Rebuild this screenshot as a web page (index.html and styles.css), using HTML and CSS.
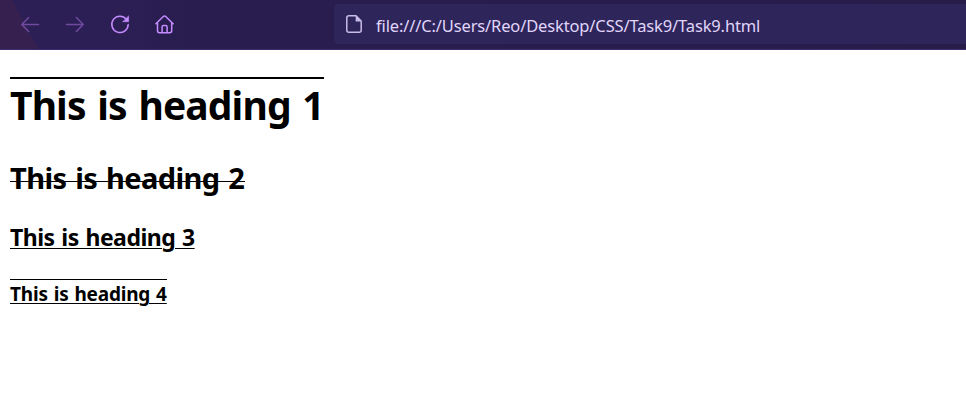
FILE: index.html
```html
<!DOCTYPE html>
<html lang="en">
<head>
<meta charset="utf-8">
<title>Task9</title>
<link rel="stylesheet" href="styles.css">
</head>
<body>
<header class="toolbar">
  <nav class="nav">
    <svg class="dim" viewBox="0 0 24 24"><path d="M20.5 12.5H3.8M10.6 5.5L3.8 12.5L10.6 19.5"/></svg>
    <svg class="dim" viewBox="0 0 24 24"><path d="M3.5 12.5H20.2M13.4 5.5L20.2 12.5L13.4 19.5"/></svg>
    <svg viewBox="0 0 24 24"><path d="M18.4 7.2A8.2 8.2 0 1 0 20.2 12.6"/><path class="solid" d="M20.6 4.2V9.7H15Z"/></svg>
    <svg viewBox="0 0 24 24"><path d="M2.9 11.7L10.3 4.5Q11.5 3.3 12.7 4.5L20.1 11.7M4.5 10.4V18.8Q4.5 20.7 6.4 20.7H16.8Q18.7 20.7 18.7 18.8V10.4M9.1 20.5V15Q9.1 13.6 10.5 13.6H12.7Q14.1 13.6 14.1 15V20.5"/></svg>
  </nav>
  <div class="address">
    <svg class="file" viewBox="0 0 16 18"><path d="M3 .8H10L15.2 6V15.2Q15.2 17.2 13.2 17.2H3Q.8 17.2 .8 15.2V2.8Q.8 .8 3 .8Z"/><path class="solid" d="M9.7 .8V6.4H15.2Z"/></svg>
    <span class="url">file:///C:/Users/Reo/Desktop/CSS/Task9/Task9.html</span>
  </div>
</header>
<main>
  <h1>This is heading 1</h1>
  <h2>This is heading 2</h2>
  <h3>This is heading 3</h3>
  <h4>This is heading 4</h4>
</main>
</body>
</html>
```
FILE: styles.css
```css
* { box-sizing: border-box; }
body {
  margin: 0;
  background: #fff;
  color: #000;
  font-family: "Noto Sans", sans-serif;
}
.toolbar {
  display: flex;
  height: 50px;
  padding: 4px 0 5px 18px;
  border-bottom: 1px solid #3b2c6b;
  background:
    linear-gradient(62deg, #35204f 0, #35204f 33px, transparent 34px),
    linear-gradient(90deg, #2c1f55 0, #2c1f55 100px, #281d4e 200px, #281c4b 100%);
}
.nav {
  display: flex;
  align-items: center;
  gap: 21px;
  width: 316px;
}
.nav svg {
  width: 24px;
  height: 24px;
  fill: none;
  stroke: #c58bff;
  stroke-width: 1.5;
  stroke-linecap: round;
  stroke-linejoin: round;
}
.nav .dim { stroke: #704a9f; }
.nav .solid { fill: #c58bff; stroke-width: .6; }
.address {
  display: flex;
  flex: 1;
  align-items: center;
  height: 40px;
  padding-left: 12px;
  border-radius: 4px 0 0 4px;
  background: #2e255b;
  color: #e0d6fa;
}
.file {
  width: 16px;
  height: 18px;
  margin-right: 14px;
  fill: none;
  stroke: #c9bce8;
  stroke-width: 1.5;
}
.file .solid { fill: #c9bce8; stroke: none; }
.url {
  padding-top: 3px;
  font-size: 16.5px;
  line-height: 22px;
  letter-spacing: -.14px;
  white-space: nowrap;
}
main {
  display: flex;
  flex-direction: column;
  align-items: flex-start;
  padding: 27px 10px 0;
}
h1, h2, h3, h4 {
  margin: 0;
  font-weight: 700;
  white-space: nowrap;
}
h1 {
  width: 314px;
  border-top: 2px solid #000;
  font-size: 39px;
  line-height: 52px;
  letter-spacing: -.87px;
  word-spacing: 2.4px;
}
h2 {
  position: relative;
  width: 235px;
  margin-top: 27px;
  font-size: 29px;
  line-height: 40px;
  letter-spacing: -.6px;
  word-spacing: 1.8px;
}
h2::after {
  content: "";
  position: absolute;
  top: 23px;
  left: 0;
  width: 100%;
  height: 1px;
  background: #000;
}
h3 {
  margin-top: 23px;
  font-size: 23px;
  line-height: 32px;
  letter-spacing: -.5px;
  word-spacing: 1.2px;
}
h4 {
  width: 157px;
  margin-top: 26px;
  border-top: 1px solid #000;
  font-size: 19px;
  line-height: 29px;
  letter-spacing: -.2px;
  word-spacing: 1.2px;
}
h3, h4 {
  text-decoration: underline;
  text-decoration-thickness: 1px;
  text-underline-offset: 2px;
}
```
